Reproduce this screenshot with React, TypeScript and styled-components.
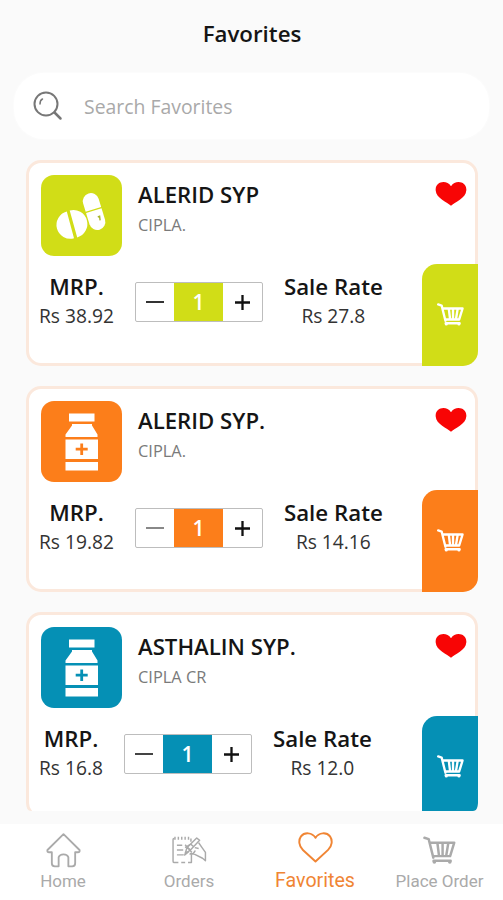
import React from "react";
import styled, { createGlobalStyle } from "styled-components";

const GlobalStyle = createGlobalStyle`
  * { box-sizing: border-box; }
  body { margin: 0; background: #fafafa; font-family: "Open Sans", "Noto Sans", sans-serif; }
  button { padding: 0; border: 0; background: none; font: inherit; color: inherit; }
  svg { display: block; }
`;

const Screen = styled.div`
  display: flex;
  flex-direction: column;
  width: 503px;
  height: 900px;
  overflow: hidden;
  background: #fafafa;
  color: #151515;
`;

const Header = styled.h1`
  margin: 0;
  height: 73px;
  padding: 19px 0 0 1px;
  text-align: center;
  font-size: 22.3px;
  line-height: 30px;
  font-weight: 600;
`;

const SearchBar = styled.label`
  display: flex;
  align-items: center;
  flex: none;
  height: 66px;
  margin: 0 14px;
  padding-left: 19px;
  gap: 21px;
  border-radius: 30px;
  background: #fff;
  box-shadow: 0 0 3px #fff;
`;

const SearchInput = styled.input`
  flex: 1;
  border: 0;
  outline: 0;
  padding: 0;
  background: transparent;
  font: 400 19.4px "Open Sans", sans-serif;
  &::placeholder { color: #a9a9a9; opacity: 1; }
`;

const CardList = styled.main`
  display: flex;
  flex-direction: column;
  gap: 20px;
  height: 651px;
  flex: none;
  margin: 21px 25px 0 26px;
  overflow: hidden;
  border-radius: 0 0 5px 5px;
`;

const Card = styled.article`
  display: grid;
  grid-template-columns: 1fr 56px;
  grid-template-rows: 102px 98px;
  flex: none;
  height: 206px;
  border: 3px solid #fbe8dc;
  border-radius: 15px;
  background: #fff;
`;

const Product = styled.div`
  display: flex;
  gap: 16px;
  padding: 12px 0 0 12px;
`;

const Tile = styled.div<{ $color: string }>`
  width: 81px;
  height: 81px;
  border-radius: 13px;
  background: ${(p) => p.$color};
`;

const Name = styled.h2`
  margin: 4px 0 0;
  font-size: 22.2px;
  line-height: 32px;
  font-weight: 600;
  white-space: nowrap;
`;

const Maker = styled.p`
  margin: 3px 0 0;
  font-size: 16.4px;
  line-height: 22px;
  color: #7a7a7a;
`;

const HeartButton = styled.button`
  align-self: start;
  justify-self: start;
  margin: 18px 0 0 16px;
`;

const Details = styled.div`
  display: flex;
  gap: 21px;
  padding: 7px 0 0 10px;
`;

const Price = styled.div`
  display: flex;
  flex-direction: column;
  align-items: center;
  white-space: nowrap;
`;

const PriceLabel = styled.span`
  font-size: 22.3px;
  line-height: 30px;
  font-weight: 600;
`;

const PriceValue = styled.span`
  font-size: 19.2px;
  line-height: 28px;
  color: #333;
`;

const Stepper = styled.div`
  display: grid;
  grid-template-columns: 38px 49px 1fr;
  width: 128px;
  height: 40px;
  margin-top: 10px;
  border: 1px solid #bdbdbd;
  border-radius: 2px;
`;

const StepButton = styled.button`
  display: grid;
  place-items: center;
`;

const Quantity = styled.span<{ $color: string }>`
  display: grid;
  place-items: center;
  background: ${(p) => p.$color};
  color: #fff;
  font-size: 21px;
  line-height: 30px;
  font-weight: 600;
`;

const CartButton = styled.button<{ $color: string }>`
  display: grid;
  place-items: center;
  width: 56px;
  height: 102px;
  margin: -1px 0 0 3px;
  border-radius: 15px 0 15px 0;
  background: ${(p) => p.$color};
  color: #fff;
`;

const Nav = styled.nav`
  display: grid;
  grid-template-columns: repeat(4, 126px);
  flex: none;
  height: 76px;
  margin-top: 13px;
  background: #fff;
`;

const NavItem = styled.a<{ $active?: boolean }>`
  display: grid;
  grid-template-rows: 45px 24px;
  align-content: start;
  justify-items: center;
  align-items: center;
  color: ${(p) => (p.$active ? "#f08534" : "#aaa")};
  font-family: Roboto, sans-serif;
  font-size: ${(p) => (p.$active ? "19.6px" : "17px")};
  line-height: 24px;
  white-space: nowrap;

  svg {
    margin-top: ${(p) => (p.$active ? "1px" : "7px")};
  }
  &:last-child {
    padding-right: 3px;
  }
`;

const SearchIcon = () => (
  <svg width="30" height="30" viewBox="0 0 30 30" fill="none" stroke="#777" strokeWidth="2" strokeLinecap="round">
    <circle cx="13" cy="13" r="11.5" />
    <path d="m21.5 21.5 6 6" strokeWidth="2.5" />
    <path d="M7 13q0-4 2.5-5" strokeWidth="1.5" />
  </svg>
);

const CartIcon = ({ size, weight = 2.8 }: { size: number; weight?: number }) => (
  <svg width={size} height={size * 0.86} viewBox="0 0 32 27.5" fill="none" stroke="currentColor" strokeWidth={weight} strokeLinecap="round" strokeLinejoin="round">
    <path d="M1.4 1.7 5.5 3l4.5 18M7 6.5h23.3L26.3 19.5H9.8M14 7l1.5 12M19 7v12M24.5 7l-2 12M10.3 24h16.5" />
    <circle cx="11" cy="25" r="1.8" fill="currentColor" stroke="none" />
    <circle cx="26" cy="25" r="1.8" fill="currentColor" stroke="none" />
  </svg>
);

const PillsIcon = () => (
  <svg width="81" height="81" viewBox="0 0 81 81" fill="#fff">
    <path d="M25.8 36.4A13.9 13.9 0 0 0 33 63.3ZM28.7 35.6A13.9 13.9 0 0 1 36.2 62.4Z" />
    <g transform="rotate(-17 53 36)">
      <path d="M44.8 34.3v-8.6a8.1 8.1 0 0 1 16.2 0v8.6Z" />
      <path d="M44.8 35.6h16.2V47.4a8.1 8.1 0 0 1-16.2 0Z" />
    </g>
    <path d="m56.8 42 1.8-.7.5 4" fill="none" stroke="#a8b52c" strokeWidth="1.4" />
  </svg>
);

const BottleIcon = ({ color }: { color: string }) => (
  <svg width="81" height="81" viewBox="0 0 81 81" fill="#fff">
    <path d="M28 12.5h25.5v8H28zM31 23h20v1.5l5.5 9V36h-32v-2.5l6.5-9zM24.5 38.5H57V58H24.5zM24.5 61H57v8.5H24.5z" />
    <path d="M40.7 42.5v11.5M34.7 48.2h12" stroke={color} strokeWidth="2.8" />
  </svg>
);

const HeartIcon = () => (
  <svg width="32" height="25" viewBox="0 0 32 25">
    <path d="M16 24.8C12.5 21 1 17.5.7 9.5-.2.5 11.5-2 16 5.3 20.5-2 32.2.5 31.3 9.5 31 17.5 19.5 21 16 24.8Z" fill="#f80505" />
  </svg>
);

const HomeIcon = () => (
  <svg width="35" height="35" viewBox="0 0 36 36" fill="none" stroke="currentColor" strokeWidth="1.9" strokeLinejoin="round">
    <path d="M18 1.2 1.5 17.5q-.5 2.5 2 2.3H6V31q0 3 3 3.3h4V25q1-3 5-3t5 3v9.3h4q3-.3 3-3.3V19.8h2.5q2.5.2 2-2.3Z" />
  </svg>
);

const OrdersIcon = () => (
  <svg width="36" height="29" viewBox="0 0 36 30" fill="none" stroke="currentColor" strokeWidth="1.5" strokeLinejoin="round">
    <path d="M3 2.5h-.5q-1 0-1 1V26q0 1.5 1.5 1.5h4M10 27.5h4M17 27.5h3.5V19M20 2.5V6" />
    <path d="M3.5.8v3M7 .8v3M10.5.8v3M14 .8v3M17.5.8v3" />
    <path d="M5.5 9.5h5.5M5.5 14.5H12M5.5 19.5h7M14 18l2-6L26 2l3 2.5-9.5 10zM16.5 12l3 2.5M20 8.5l3 2.8M18 16l-5 4M18.5 18.5q4 1 6-3.5M28 7l3.5 5 3.5 5v8.5l-3-2.5-8-4-5-1" />
    <path d="m14 12 5-3M14 9l7 8M24 12l4 1" />
  </svg>
);

const HeartOutline = () => (
  <svg width="35" height="31" viewBox="0 0 36 32" fill="none" stroke="currentColor" strokeWidth="2" strokeLinejoin="round">
    <path d="M18 30.5 5 18.5C.8 14.5.2 8.5 3 4.5 6.5 0 14.5.2 18 6 21.5.2 29.5 0 33 4.5c2.8 4 2.2 10-2 14Z" />
  </svg>
);

const products = [
  { name: "ALERID SYP", maker: "CIPLA.", mrp: "Rs 38.92", rate: "Rs 27.8", color: "#d1dd17", icon: "pills", minus: "#333" },
  { name: "ALERID SYP.", maker: "CIPLA.", mrp: "Rs 19.82", rate: "Rs 14.16", color: "#fc7e1a", icon: "bottle", minus: "#888" },
  { name: "ASTHALIN SYP.", maker: "CIPLA CR", mrp: "Rs 16.8", rate: "Rs 12.0", color: "#0590b5", icon: "bottle", minus: "#444" },
];

export default function App() {
  return (
    <Screen>
      <GlobalStyle />
      <Header>Favorites</Header>
      <SearchBar>
        <SearchIcon />
        <SearchInput placeholder="Search Favorites" />
      </SearchBar>
      <CardList>
        {products.map((p) => (
          <Card key={p.name}>
            <Product>
              <Tile $color={p.color}>{p.icon === "pills" ? <PillsIcon /> : <BottleIcon color={p.color} />}</Tile>
              <div>
                <Name>{p.name}</Name>
                <Maker>{p.maker}</Maker>
              </div>
            </Product>
            <HeartButton aria-label="Remove favorite"><HeartIcon /></HeartButton>
            <Details>
              <Price>
                <PriceLabel>MRP.</PriceLabel>
                <PriceValue>{p.mrp}</PriceValue>
              </Price>
              <Stepper>
                <StepButton aria-label="Decrease">
                  <svg width="18" height="18" stroke={p.minus} strokeWidth="2"><path d="M0 9h18" /></svg>
                </StepButton>
                <Quantity $color={p.color}>1</Quantity>
                <StepButton aria-label="Increase">
                  <svg width="15" height="15" stroke="#111" strokeWidth="2.3"><path d="M0 7.5h15M7.5 0v15" /></svg>
                </StepButton>
              </Stepper>
              <Price>
                <PriceLabel>Sale Rate</PriceLabel>
                <PriceValue>{p.rate}</PriceValue>
              </Price>
            </Details>
            <CartButton $color={p.color} aria-label="Add to cart"><CartIcon size={27} /></CartButton>
          </Card>
        ))}
      </CardList>
      <Nav>
        <NavItem><HomeIcon />Home</NavItem>
        <NavItem><OrdersIcon />Orders</NavItem>
        <NavItem $active><HeartOutline />Favorites</NavItem>
        <NavItem><CartIcon size={33} weight={2.4} />Place Order</NavItem>
      </Nav>
    </Screen>
  );
}
